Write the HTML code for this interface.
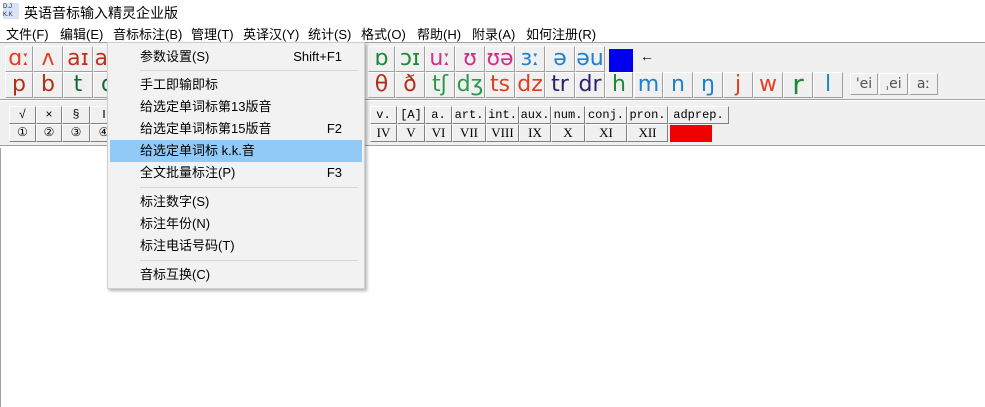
<!DOCTYPE html>
<html><head><meta charset="utf-8"><style>
*{margin:0;padding:0;box-sizing:border-box}
body{width:985px;height:407px;overflow:hidden;background:#fff;font-family:"Liberation Sans","Noto Sans CJK SC",sans-serif;position:relative}
.a{position:absolute}
.t{font-size:13px;color:#000;white-space:nowrap}
.pb{position:absolute;height:26px;border:1px solid #fff;border-right-color:#a0a0a0;border-bottom-color:#a0a0a0;background:#f0f0f0;text-align:center;font-size:22px;line-height:24px;font-family:"DejaVu Sans",sans-serif}
.sb{position:absolute;height:18px;border:1px solid #fff;border-right-color:#808080;border-bottom-color:#808080;background:#f0f0f0;text-align:center;font-size:12px;line-height:16px;font-family:"Liberation Mono","Liberation Serif",serif}
.rn{font-family:"Liberation Serif","DejaVu Serif",serif;font-size:13px}
.mi{position:absolute;left:32px;font-size:13px;line-height:16px;white-space:nowrap;font-family:"Liberation Sans","Noto Sans CJK SC",sans-serif}
.sc{position:absolute;right:22px;font-size:13px;line-height:16px;font-family:"Liberation Sans",sans-serif}
.sep{position:absolute;left:32px;right:6px;height:1px;background:#d7d7d7}
</style></head><body>
<div class="a" style="left:3px;top:3px;width:16px;height:16px;background:#d8e4f5;font-size:6px;line-height:8px;color:#226">D.J<br>K.K</div>
<div class="a t" style="left:24px;top:3px;font-size:14px">英语音标输入精灵企业版</div>
<div class="a t" style="left:6px;top:24px">文件(F)</div>
<div class="a t" style="left:60px;top:24px">编辑(E)</div>
<div class="a t" style="left:113px;top:24px">音标标注(B)</div>
<div class="a t" style="left:191px;top:24px">管理(T)</div>
<div class="a t" style="left:243px;top:24px">英译汉(Y)</div>
<div class="a t" style="left:308px;top:24px">统计(S)</div>
<div class="a t" style="left:361px;top:24px">格式(O)</div>
<div class="a t" style="left:417px;top:24px">帮助(H)</div>
<div class="a t" style="left:472px;top:24px">附录(A)</div>
<div class="a t" style="left:526px;top:24px">如何注册(R)</div>
<div class="a" style="left:0;top:42px;width:985px;height:105px;background:#f0f0f0;border-top:1px solid #a0a0a0"></div>
<div class="a" style="left:0;top:99px;width:985px;height:2px;border-top:1px solid #a0a0a0;border-bottom:1px solid #fff"></div>
<div class="a" style="left:0;top:145px;width:985px;height:2px;border-top:1px solid #a0a0a0;border-bottom:1px solid #fff"></div>
<div class="pb" style="left:5px;top:46px;width:28px;color:#e04020">ɑː</div>
<div class="pb" style="left:33px;top:46px;width:30px;color:#e04020">ʌ</div>
<div class="pb" style="left:63px;top:46px;width:30px;color:#c03020">aɪ</div>
<div class="pb" style="left:93px;top:46px;width:30px;color:#c03020">aʊ</div>
<div class="pb" style="left:368px;top:46px;width:27px;color:#1a8a3a">ɒ</div>
<div class="pb" style="left:395px;top:46px;width:30px;color:#1a8a3a">ɔɪ</div>
<div class="pb" style="left:425px;top:46px;width:30px;color:#d0308a">uː</div>
<div class="pb" style="left:455px;top:46px;width:30px;color:#d0308a">ʊ</div>
<div class="pb" style="left:485px;top:46px;width:30px;color:#d0308a">ʊə</div>
<div class="pb" style="left:515px;top:46px;width:30px;color:#2080d0">ɜː</div>
<div class="pb" style="left:545px;top:46px;width:30px;color:#2080d0">ə</div>
<div class="pb" style="left:575px;top:46px;width:30px;color:#2080d0">əu</div>
<div class="a" style="left:609px;top:49px;width:24px;height:23px;background:#0000f0"></div>
<div class="a" style="left:640px;top:48px;font-size:14px">←</div>
<div class="pb" style="left:5px;top:72px;width:28px;color:#b03018">p</div>
<div class="pb" style="left:33px;top:72px;width:30px;color:#b03018">b</div>
<div class="pb" style="left:63px;top:72px;width:30px;color:#106838">t</div>
<div class="pb" style="left:93px;top:72px;width:30px;color:#106838">d</div>
<div class="pb" style="left:368px;top:72px;width:27px;color:#b03018">θ</div>
<div class="pb" style="left:395px;top:72px;width:30px;color:#b03018">ð</div>
<div class="pb" style="left:425px;top:72px;width:30px;color:#2a9a4a">tʃ</div>
<div class="pb" style="left:455px;top:72px;width:30px;color:#2a9a4a">dʒ</div>
<div class="pb" style="left:485px;top:72px;width:30px;color:#e04020">ts</div>
<div class="pb" style="left:515px;top:72px;width:30px;color:#e04020">dz</div>
<div class="pb" style="left:545px;top:72px;width:30px;color:#302070">tr</div>
<div class="pb" style="left:575px;top:72px;width:30px;color:#302070">dr</div>
<div class="pb" style="left:605px;top:72px;width:28px;color:#1a8a3a">h</div>
<div class="pb" style="left:634px;top:72px;width:29px;color:#2080d0">m</div>
<div class="pb" style="left:663px;top:72px;width:30px;color:#2080d0">n</div>
<div class="pb" style="left:693px;top:72px;width:30px;color:#2080d0">ŋ</div>
<div class="pb" style="left:723px;top:72px;width:30px;color:#e04020">j</div>
<div class="pb" style="left:753px;top:72px;width:30px;color:#e04020">w</div>
<div class="pb" style="left:783px;top:72px;width:30px;color:#1a8a3a;font-size:28px">r</div>
<div class="pb" style="left:813px;top:72px;width:30px;color:#2080d0">l</div>
<div class="pb" style="left:850px;top:73px;width:28px;height:22px;font-size:14px;line-height:20px;color:#555">'ei</div>
<div class="pb" style="left:879px;top:73px;width:29px;height:22px;font-size:14px;line-height:20px;color:#555">ˌei</div>
<div class="pb" style="left:909px;top:73px;width:29px;height:22px;font-size:14px;line-height:20px;color:#555">aː</div>
<div class="sb" style="left:9px;top:106px;width:27px">√</div>
<div class="sb" style="left:36px;top:106px;width:26px">×</div>
<div class="sb" style="left:62px;top:106px;width:28px">§</div>
<div class="sb" style="left:90px;top:106px;width:28px">‖</div>
<div class="sb" style="left:370px;top:106px;width:27px">v.</div>
<div class="sb" style="left:397px;top:106px;width:28px">[A]</div>
<div class="sb" style="left:425px;top:106px;width:27px">a.</div>
<div class="sb" style="left:452px;top:106px;width:34px">art.</div>
<div class="sb" style="left:486px;top:106px;width:33px">int.</div>
<div class="sb" style="left:519px;top:106px;width:32px">aux.</div>
<div class="sb" style="left:551px;top:106px;width:34px">num.</div>
<div class="sb" style="left:585px;top:106px;width:42px">conj.</div>
<div class="sb" style="left:627px;top:106px;width:41px">pron.</div>
<div class="sb" style="left:668px;top:106px;width:61px">adprep.</div>
<div class="sb" style="left:9px;top:124px;width:27px">①</div>
<div class="sb" style="left:36px;top:124px;width:26px">②</div>
<div class="sb" style="left:62px;top:124px;width:28px">③</div>
<div class="sb" style="left:90px;top:124px;width:28px">④</div>
<div class="sb rn" style="left:370px;top:124px;width:27px">IV</div>
<div class="sb rn" style="left:397px;top:124px;width:28px">V</div>
<div class="sb rn" style="left:425px;top:124px;width:27px">VI</div>
<div class="sb rn" style="left:452px;top:124px;width:34px">VII</div>
<div class="sb rn" style="left:486px;top:124px;width:33px">VIII</div>
<div class="sb rn" style="left:519px;top:124px;width:32px">IX</div>
<div class="sb rn" style="left:551px;top:124px;width:34px">X</div>
<div class="sb rn" style="left:585px;top:124px;width:42px">XI</div>
<div class="sb rn" style="left:627px;top:124px;width:41px">XII</div>
<div class="a" style="left:670px;top:125px;width:42px;height:17px;background:#f00000"></div>
<div class="a" style="left:0;top:148px;width:985px;height:259px;background:#fff;border-left:1px solid #a0a0a0"></div>
<div class="a" style="left:107px;top:42px;width:258px;height:247px;background:#f2f2f2;border:1px solid #cfcfcf;box-shadow:2px 2px 3px rgba(0,0,0,.3)">
<div class="mi" style="top:6px">参数设置(S)</div><div class="sc" style="top:6px">Shift+F1</div>
<div class="sep" style="top:27px"></div>
<div class="mi" style="top:34px">手工即输即标</div>
<div class="mi" style="top:56px">给选定单词标第13版音</div>
<div class="mi" style="top:78px">给选定单词标第15版音</div><div class="sc" style="top:78px">F2</div>
<div class="a" style="left:2px;top:97px;width:252px;height:22px;background:#91c9f7"></div>
<div class="mi" style="top:100px">给选定单词标 k.k.音</div>
<div class="mi" style="top:122px">全文批量标注(P)</div><div class="sc" style="top:122px">F3</div>
<div class="sep" style="top:144px"></div>
<div class="mi" style="top:151px">标注数字(S)</div>
<div class="mi" style="top:173px">标注年份(N)</div>
<div class="mi" style="top:195px">标注电话号码(T)</div>
<div class="sep" style="top:217px"></div>
<div class="mi" style="top:224px">音标互换(C)</div>
</div>
</body></html>
